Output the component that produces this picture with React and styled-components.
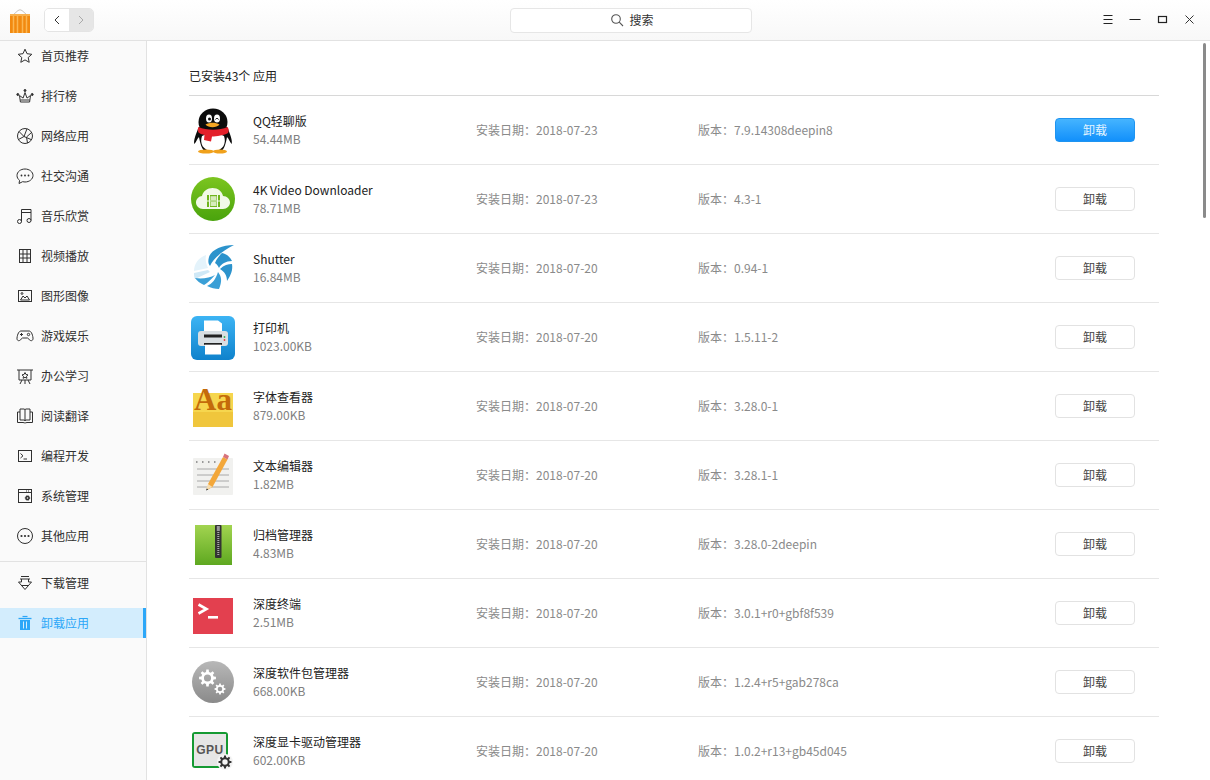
import React from "react";
import styled, { createGlobalStyle } from "styled-components";

const GlobalStyle = createGlobalStyle`
  html, body {
    margin: 0;
    padding: 0;
    background: #fff;
    overflow: hidden;
  }
  * {
    box-sizing: border-box;
  }
`;

const NavSvg = ({ children }) => (
  <svg width="18" height="18" viewBox="0 0 18 18" fill="none" stroke="currentColor" strokeWidth="1">
    {children}
  </svg>
);

const navIcons = {
  star: <path d="M9 2.200l2 4.500 4.800.6-3.600 3.200 1 4.800L9 12.900l-4.200 2.400 1-4.800-3.600-3.200L7 6.700z" />,
  crown: (
    <>
      <path d="M3.500 8.500l.9 6.500h9.200l.9-6.500-3.500 2.600L9 5.500l-1.900 5.600z" />
      <path d="M4.500 13h9" />
      <circle cx="1.800" cy="7.500" r="1" fill="currentColor" />
      <circle cx="16.200" cy="7.500" r="1" fill="currentColor" />
      <circle cx="9" cy="3.500" r="1" fill="currentColor" />
    </>
  ),
  globe: (
    <>
      <circle cx="9" cy="9" r="7.500" />
      <path d="M3 4.500l5 5-5.500 3M11 1.800L8 9.500l7 3M15.500 5.500l-5 4.500 1 6" />
    </>
  ),
  chat: (
    <>
      <path d="M9 2C4.600 2 1 4.800 1 8.500c0 2 1 3.700 2.600 4.900L3 16.500l3.600-1.800c.8.200 1.600.300 2.400.300 4.400 0 8-2.900 8-6.500S13.400 2 9 2z" />
      <circle cx="5.500" cy="8.500" r=".9" fill="currentColor" stroke="none" />
      <circle cx="9" cy="8.500" r=".9" fill="currentColor" stroke="none" />
      <circle cx="12.500" cy="8.500" r=".9" fill="currentColor" stroke="none" />
    </>
  ),
  music: (
    <>
      <path d="M5.500 14.500V2.500h9.500v11M5.500 5.500H15" />
      <circle cx="3.500" cy="14.500" r="2" />
      <circle cx="13" cy="13.500" r="2" />
    </>
  ),
  film: (
    <>
      <rect x="3.500" y="2.500" width="11" height="13" />
      <path d="M7 2.500v13M11 2.500v13M3.500 7h11M3.500 11h11" />
    </>
  ),
  image: (
    <>
      <rect x="2.500" y="3.500" width="13" height="11" />
      <path d="M4.500 13l2.500-4 2 2 2-2 2.500 4z" />
      <circle cx="6" cy="6.500" r=".9" />
    </>
  ),
  game: (
    <>
      <path d="M5 4h8c2 0 3.500 3 4 7 .3 2.500-1.800 3.500-3.200 2L11.500 11h-5l-2.300 2C2.800 14.500.7 13.500 1 11c.5-4 2-7 4-7z" />
      <path d="M5.500 6v3M4 7.500h3" />
      <circle cx="12.500" cy="7.500" r="1.200" />
    </>
  ),
  board: (
    <>
      <path d="M1 3h16M3 3v10h12V3M6 13l-2 4M12 13l2 4M9 13v4" />
      <path d="M9 5.500l1 2 2 .4-1.500 1.400.4 2L9 10.300l-1.900 1 .4-2L6 7.900l2-.4z" />
    </>
  ),
  book: (
    <>
      <path d="M4 2h4c.6 0 1 .4 1 1 0-.6.4-1 1-1h4v11h-4c-.6 0-1 .3-1 1 0-.7-.4-1-1-1H4zM9 3v11" />
      <path d="M4 5H1.500v10.500H7c1 0 1.500.5 2 .5s1-.5 2-.5h5.500V5H14" />
    </>
  ),
  terminal: (
    <>
      <rect x="2.500" y="3.500" width="13" height="11" />
      <path d="M4.500 6.500l2.500 2.300-2.500 2.200M7.500 12H11" />
    </>
  ),
  system: (
    <>
      <rect x="2.500" y="2.500" width="13" height="13" />
      <path d="M2.500 5.500h13" />
      <path d="M10 4h4" strokeDasharray="1 1" />
      <circle cx="11.500" cy="11" r="2.200" fill="currentColor" strokeDasharray="1 .6" />
      <circle cx="11.500" cy="11" r=".8" fill="#fafafa" stroke="none" />
    </>
  ),
  more: (
    <>
      <circle cx="9" cy="9" r="7.500" />
      <circle cx="5.500" cy="9" r="1.100" fill="currentColor" stroke="none" />
      <circle cx="9" cy="9" r="1.100" fill="currentColor" stroke="none" />
      <circle cx="12.500" cy="9" r="1.100" fill="currentColor" stroke="none" />
    </>
  ),
  download: <path d="M5 2.500h8M4 5h10M5.500 5v3H2.500L9 15.500 15.500 8h-3V5M5.500 11.500h7" />,
  trash: (
    <g>
      <path d="M2.500 4.500h13" strokeWidth="1.300" />
      <path d="M6.500 2.500h5" strokeWidth="1.200" />
      <path d="M4 6h10v10H4z" fill="currentColor" stroke="none" />
      <path d="M7.500 7.500v7M10.500 7.500v7" stroke="#d3edfd" />
    </g>
  ),
};

const navItems = [
  ["star", "首页推荐"],
  ["crown", "排行榜"],
  ["globe", "网络应用"],
  ["chat", "社交沟通"],
  ["music", "音乐欣赏"],
  ["film", "视频播放"],
  ["image", "图形图像"],
  ["game", "游戏娱乐"],
  ["board", "办公学习"],
  ["book", "阅读翻译"],
  ["terminal", "编程开发"],
  ["system", "系统管理"],
  ["more", "其他应用"],
];

const AppSvg = ({ children }) => (
  <svg width="48" height="48" viewBox="0 0 48 48">
    {children}
  </svg>
);

// toothed wheel with a hole, used by the package manager and gpu icons
const gearPath = (cx, cy, r, teeth) => {
  const pts = [];
  const step = (Math.PI * 2) / teeth;
  for (let i = 0; i < teeth; i++) {
    const a = i * step;
    [
      [-0.3, 0.74],
      [-0.18, 1],
      [0.18, 1],
      [0.3, 0.74],
      [0.7, 0.74],
    ].forEach(([off, k]) => {
      const t = a + off * step;
      pts.push(`${(cx + Math.cos(t) * r * k).toFixed(2)} ${(cy + Math.sin(t) * r * k).toFixed(2)}`);
    });
  }
  const h = r * 0.42;
  return `M${pts.join("L")}Z M${cx - h} ${cy}a${h} ${h} 0 1 0 ${h * 2} 0a${h} ${h} 0 1 0 ${-h * 2} 0Z`;
};

const Gear = ({ cx, cy, r, teeth = 8, color = "#fff" }) => (
  <path d={gearPath(cx, cy, r, teeth)} fill={color} fillRule="evenodd" />
);

const QQIcon = () => (
  <AppSvg>
    <path d="M10 31c-2 2-3.500 6-4.500 7C4 36 7 27 10 21h28c3 6 6 15 4.500 17-1-1-2.500-5-4.500-7-1 6-3 13-6 14H16c-3-1-5-8-6-14z" fill="#0c0c0c" />
    <ellipse cx="24" cy="16" rx="14.500" ry="13.500" fill="#0c0c0c" />
    <path d="M13 30c3-2 19-2 22 0 2.500 7-.5 15-11 15s-13.500-8-11-15z" fill="#fff" />
    <ellipse cx="20" cy="12.500" rx="3" ry="4" fill="#fff" />
    <ellipse cx="28" cy="12.500" rx="3" ry="4" fill="#fff" />
    <circle cx="20.500" cy="13" r="1.500" fill="#111" />
    <path d="M26.500 13.500c.5-1.500 2.500-1.500 3 0" stroke="#111" fill="none" />
    <path d="M16.500 18.500c4-2.500 10-2.500 14 0-3 3.500-11 3.500-14 0z" fill="#f5a623" />
    <path d="M9.500 21c8 3.500 21 3.500 29 0 1.500 2 1.500 4 .5 6-3 2-12 3.500-16 3.500l-1 5-7-1.500 .5-5c-2-.5-4-1-6-2.500-1-2-1-3.500 0-5.500z" fill="#e3202a" />
    <ellipse cx="17" cy="45.500" rx="8" ry="2" fill="#f0a11c" />
    <ellipse cx="31" cy="45.500" rx="7" ry="2" fill="#f0a11c" />
  </AppSvg>
);

const VideoIcon = () => (
  <AppSvg>
    <defs>
      <linearGradient id="vg" x1="0" y1="0" x2="0" y2="1">
        <stop offset="0" stopColor="#7cc520" />
        <stop offset="1" stopColor="#49a30c" />
      </linearGradient>
    </defs>
    <circle cx="24" cy="24" r="22" fill="url(#vg)" />
    <path d="M14 34c-4 0-7-3-7-6.500S10 21 13 21c1-5 5.500-8 10.500-8 5.500 0 9.500 3.500 10.500 8 4 0 7 3 7 6.500S38 34 34 34z" fill="#f2f9e8" />
    <rect x="18" y="20" width="13" height="12" fill="#6fb51c" />
    <path d="M20.500 20v12M28.500 20v12M18 26h13" stroke="#f2f9e8" strokeWidth="1" />
    <rect x="21.500" y="21.200" width="6" height="4" fill="#d7ecbc" />
    <rect x="21.500" y="27" width="6" height="4" fill="#d7ecbc" />
  </AppSvg>
);

const ShutterIcon = () => (
  <AppSvg>
    <path d="M17 11C9 14 5 20 5 27l14-3C17 20 16 15 17 11z" fill="#e4f3fb" />
    <path d="M5 29c0 2 0 4 1 6l15-7-2-2z" fill="#cfe8f6" />
    <path d="M45 1C33 1 22 6 20 13c-1 4-1 6 1 9C24 15 33 7 45 1z" fill="#2c93cc" />
    <path d="M26 19c2-5 5-8 7-10 5 1 8 4 10 8-6 0-11 3-13 7-1-2-2-4-4-5z" fill="#2c93cc" />
    <path d="M31 25c4-4 8-5 12-5 1 6-1 11-5 17 0-5-2-9-7-12z" fill="#2c93cc" />
    <path d="M29 28c4 5 4 10 1 17-4 0-8-1-12-3 5-2 9-7 11-14z" fill="#3a9fd6" />
    <path d="M26 31c-4 5-9 9-11 10-4-2-7-4-9-7 7 1 15 0 20-3z" fill="#3a9fd6" />
  </AppSvg>
);

const PrinterIcon = () => (
  <AppSvg>
    <defs>
      <linearGradient id="pg" x1="0" y1="0" x2="0" y2="1">
        <stop offset="0" stopColor="#3cb4f4" />
        <stop offset="1" stopColor="#0f82cc" />
      </linearGradient>
    </defs>
    <rect x="2" y="3" width="44" height="44" rx="6" fill="url(#pg)" />
    <path d="M15 19V7.500h14l4 3V19z" fill="#fff" />
    <rect x="9" y="18" width="30" height="15" rx="3" fill="#d9dfe3" />
    <rect x="15" y="21.500" width="18" height="3" fill="#222" />
    <rect x="15" y="30" width="18" height="1.800" fill="#222" />
    <rect x="16" y="31.800" width="16" height="9.700" fill="#fff" />
    <circle cx="35.500" cy="24" r=".9" fill="#32b050" />
    <circle cx="35.500" cy="27" r=".9" fill="#e04040" />
  </AppSvg>
);

const FontIcon = () => (
  <AppSvg>
    <rect x="4" y="11" width="40" height="19" fill="#f6d64e" />
    <rect x="4" y="30" width="40" height="15" fill="#f0c63c" />
    <text x="24" y="28" textAnchor="middle" fontFamily="Liberation Serif, serif" fontWeight="700" fontSize="31" fill="#c46b0a">
      Aa
    </text>
  </AppSvg>
);

const EditorIcon = () => (
  <AppSvg>
    <rect x="4" y="7" width="40" height="37" rx="1" fill="#f1f1ef" />
    <path d="M8 18h32M8 24h32M8 30h32M8 36h32" stroke="#a8a8a8" strokeWidth="1" />
    <path d="M7 11h1.500M13 11h1.500M19 11h1.500M25 11h1.500" stroke="#999" strokeWidth="2" />
    <path d="M19 33L34 6l4.500 2.500L23.500 36l-4.500 2.500z" fill="#f3a73a" />
    <path d="M19 33l4.500 3-6.500 3z" fill="#f5dcb0" />
    <path d="M17.800 37.500l1.500 1-2.300 1z" fill="#222" />
    <path d="M34 6l1.500-3.500 4.500 2.500-1.500 3.500z" fill="#d8737b" />
  </AppSvg>
);

const ArchiveIcon = () => (
  <AppSvg>
    <defs>
      <linearGradient id="ag" x1="0" y1="0" x2="0" y2="1">
        <stop offset="0" stopColor="#a2d450" />
        <stop offset="1" stopColor="#5ea820" />
      </linearGradient>
    </defs>
    <rect x="6" y="5" width="37" height="40" fill="url(#ag)" />
    <rect x="26" y="5" width="6.500" height="33" rx="1" fill="#333" />
    <rect x="27.800" y="6" width="3" height="5" fill="#999" />
    <path d="M29.300 12v24" stroke="#aaa" strokeWidth="2" strokeDasharray="1 1" />
  </AppSvg>
);

const TerminalIcon = () => (
  <AppSvg>
    <rect x="4" y="9" width="40" height="36" fill="#e3404f" />
    <path d="M9.500 15.500l8 4.500-8 4.500" fill="none" stroke="#fff" strokeWidth="2.600" />
    <rect x="19" y="27" width="10" height="2.600" fill="#fff" />
  </AppSvg>
);

const PackageIcon = () => (
  <AppSvg>
    <defs>
      <linearGradient id="kg" x1="0" y1="0" x2="0" y2="1">
        <stop offset="0" stopColor="#b8b8b8" />
        <stop offset="1" stopColor="#8a8a8a" />
      </linearGradient>
    </defs>
    <circle cx="24" cy="24" r="21" fill="url(#kg)" />
    <Gear cx={18.500} cy={20} r={8.500} />
    <Gear cx={31} cy={31} r={5.500} />
  </AppSvg>
);

const GpuIcon = () => (
  <AppSvg>
    <rect x="3" y="5" width="36" height="36" rx="3" fill="#159a32" />
    <rect x="5" y="7" width="32" height="32" fill="#e6e6e6" />
    <text x="21" y="27" textAnchor="middle" fontFamily="Liberation Sans, sans-serif" fontWeight="700" fontSize="12" letterSpacing=".5" fill="#555">
      GPU
    </text>
    <circle cx="36" cy="35" r="8" fill="#f4f4f4" />
    <Gear cx={36} cy={35} r={6.500} color="#333" />
  </AppSvg>
);

const apps = [
  { icon: <QQIcon />, name: "QQ轻聊版", size: "54.44MB", date: "2018-07-23", version: "7.9.14308deepin8", primary: true },
  { icon: <VideoIcon />, name: "4K Video Downloader", size: "78.71MB", date: "2018-07-23", version: "4.3-1" },
  { icon: <ShutterIcon />, name: "Shutter", size: "16.84MB", date: "2018-07-20", version: "0.94-1" },
  { icon: <PrinterIcon />, name: "打印机", size: "1023.00KB", date: "2018-07-20", version: "1.5.11-2" },
  { icon: <FontIcon />, name: "字体查看器", size: "879.00KB", date: "2018-07-20", version: "3.28.0-1" },
  { icon: <EditorIcon />, name: "文本编辑器", size: "1.82MB", date: "2018-07-20", version: "3.28.1-1" },
  { icon: <ArchiveIcon />, name: "归档管理器", size: "4.83MB", date: "2018-07-20", version: "3.28.0-2deepin" },
  { icon: <TerminalIcon />, name: "深度终端", size: "2.51MB", date: "2018-07-20", version: "3.0.1+r0+gbf8f539" },
  { icon: <PackageIcon />, name: "深度软件包管理器", size: "668.00KB", date: "2018-07-20", version: "1.2.4+r5+gab278ca" },
  { icon: <GpuIcon />, name: "深度显卡驱动管理器", size: "602.00KB", date: "2018-07-20", version: "1.0.2+r13+gb45d045" },
];

function App() {
  return (
    <Window>
      <GlobalStyle />
      <TitleBar>
        <TitleLeft>
          <svg width="24" height="26" viewBox="0 0 24 26">
            <path d="M5 8l5-4.500Q12 2 14 3.500L19 8" fill="none" stroke="#c9c4bd" strokeWidth="1" />
            <rect x="2" y="7" width="20" height="19" fill="#f28a10" />
            <path d="M5.500 9v17M9.500 9v17M14.500 9v17M18.500 9v17" stroke="#fbb652" strokeWidth="1.500" />
            <path d="M2 7h20v2H2z" fill="#f7b04e" />
          </svg>
          <NavButtons>
            <NavArrow>
              <svg width="8" height="10" viewBox="0 0 8 10" fill="none" stroke="#333">
                <path d="M6 1L2 5l4 4" />
              </svg>
            </NavArrow>
            <NavArrow $disabled>
              <svg width="8" height="10" viewBox="0 0 8 10" fill="none" stroke="#aaa">
                <path d="M2 1l4 4-4 4" />
              </svg>
            </NavArrow>
          </NavButtons>
        </TitleLeft>
        <SearchBox>
          <svg width="14" height="14" viewBox="0 0 14 14" fill="none" stroke="#555" strokeWidth="1.100">
            <circle cx="6" cy="6" r="4.300" />
            <path d="M9.200 9.200L13 13" />
          </svg>
          <SearchLabel>搜索</SearchLabel>
        </SearchBox>
        <WindowControls>
          <WindowButton>
            <svg width="12" height="12" viewBox="0 0 12 12" stroke="#222">
              <path d="M1.500 1.500h9M1.500 5.500h9M1.500 9.500h9" />
            </svg>
          </WindowButton>
          <WindowButton>
            <svg width="12" height="12" viewBox="0 0 12 12" stroke="#222">
              <path d="M.500 5.500h11" />
            </svg>
          </WindowButton>
          <WindowButton>
            <svg width="12" height="12" viewBox="0 0 12 12" fill="none" stroke="#222">
              <rect x="2.500" y="2.500" width="8" height="6" strokeWidth="1.200" />
            </svg>
          </WindowButton>
          <WindowButton>
            <svg width="12" height="12" viewBox="0 0 12 12" stroke="#333">
              <path d="M2.500 1.500l8 8M10.500 1.500l-8 8" />
            </svg>
          </WindowButton>
        </WindowControls>
      </TitleBar>
      <Body>
        <Sidebar>
          <NavList>
            {navItems.map(([icon, label]) => (
              <NavItem key={label}>
                <NavIcon>
                  <NavSvg>{navIcons[icon]}</NavSvg>
                </NavIcon>
                <NavLabel>{label}</NavLabel>
              </NavItem>
            ))}
          </NavList>
          <NavDivider />
          <NavItem>
            <NavIcon>
              <NavSvg>{navIcons.download}</NavSvg>
            </NavIcon>
            <NavLabel>下载管理</NavLabel>
          </NavItem>
          <ActiveNavItem>
            <NavIcon>
              <NavSvg>{navIcons.trash}</NavSvg>
            </NavIcon>
            <NavLabel>卸载应用</NavLabel>
          </ActiveNavItem>
        </Sidebar>
        <Main>
          <ListHeader>已安装43个 应用</ListHeader>
          {apps.map((app) => (
            <Row key={app.name}>
              <IconSlot>{app.icon}</IconSlot>
              <NameColumn>
                <AppName>{app.name}</AppName>
                <AppSize>{app.size}</AppSize>
              </NameColumn>
              <DateColumn>安装日期：{app.date}</DateColumn>
              <VersionColumn>版本：{app.version}</VersionColumn>
              <UninstallButton $primary={app.primary}>卸载</UninstallButton>
            </Row>
          ))}
          <ScrollThumb />
        </Main>
      </Body>
    </Window>
  );
}

const Window = styled.div`
  width: 1210px;
  height: 780px;
  display: flex;
  flex-direction: column;
  overflow: hidden;
  background: #fff;
  font-family: "Noto Sans CJK SC", "Noto Sans", sans-serif;
  font-size: 12px;
  color: #303030;
`;

const TitleBar = styled.header`
  flex: none;
  height: 41px;
  display: grid;
  grid-template-columns: 502px 242px 1fr;
  align-items: center;
  padding: 0 0 0 8px;
  background: linear-gradient(#ffffff, #f8f8f8);
  border-bottom: 1px solid #e2e2e2;
`;

const TitleLeft = styled.div`
  display: flex;
  align-items: center;
  gap: 12px;
`;

const NavButtons = styled.div`
  display: flex;
  height: 24px;
  border: 1px solid #e4e4e4;
  border-radius: 5px;
  overflow: hidden;
`;

const NavArrow = styled.div`
  width: 24px;
  display: flex;
  align-items: center;
  justify-content: center;
  background: ${(p) => (p.$disabled ? "#e6e6e6" : "#fff")};
`;

const SearchBox = styled.div`
  height: 25px;
  display: flex;
  align-items: center;
  justify-content: center;
  gap: 5px;
  padding-left: 2px;
  background: #fff;
  border: 1px solid #e6e6e6;
  border-radius: 4px;
  font-size: 12px;
  color: #333;
`;

const SearchLabel = styled.span`
  margin-bottom: 2px;
`;

const WindowControls = styled.div`
  display: flex;
  justify-content: flex-end;
  padding-right: 15px;
  gap: 15px;
`;

const WindowButton = styled.div`
  width: 12px;
  height: 12px;
  display: flex;
`;

const Body = styled.div`
  flex: 1;
  min-height: 0;
  display: flex;
`;

const Sidebar = styled.nav`
  flex: none;
  width: 147px;
  background: #fafafa;
  border-right: 1px solid #e2e2e2;
  overflow: hidden;
`;

const NavList = styled.div`
  margin-top: -5px;
`;

const NavItem = styled.div`
  height: 40px;
  display: flex;
  align-items: center;
  padding-left: 16px;
  gap: 7px;
  font-size: 12px;
  color: #303030;
`;

const ActiveNavItem = styled(NavItem)`
  height: 30px;
  margin-top: 5px;
  background: #d3edfd;
  color: #2ca7f8;
  box-shadow: inset -3px 0 0 #2ca7f8;
`;

const NavIcon = styled.span`
  width: 18px;
  height: 18px;
  display: flex;
`;

const NavLabel = styled.span`
  margin-bottom: 2px;
`;

const NavDivider = styled.div`
  height: 1px;
  background: #e2e2e2;
  margin: 5px 0 1px;
`;

const Main = styled.main`
  position: relative;
  flex: 1;
  min-width: 0;
  padding: 0 51px 0 42px;
  overflow: hidden;
`;

const ListHeader = styled.div`
  height: 55px;
  padding-top: 26px;
  line-height: 18px;
  font-size: 12px;
  color: #222;
  border-bottom: 1px solid #d8d8d8;
`;

const Row = styled.div`
  height: 69px;
  display: flex;
  align-items: center;
  border-bottom: 1px solid #e6e6e6;
`;

const IconSlot = styled.div`
  flex: none;
  width: 48px;
  height: 48px;
  margin-right: 16px;
`;

const NameColumn = styled.div`
  flex: none;
  width: 223px;
  display: flex;
  flex-direction: column;
`;

const AppName = styled.div`
  font-size: 12px;
  line-height: 18px;
  color: #222;
`;

const AppSize = styled.div`
  font-size: 12px;
  line-height: 18px;
  color: #808080;
`;

const DateColumn = styled.div`
  flex: none;
  width: 222px;
  padding-bottom: 2px;
  color: #8a8a8a;
`;

const VersionColumn = styled.div`
  flex: 1;
  padding-bottom: 2px;
  color: #8a8a8a;
`;

const UninstallButton = styled.button`
  flex: none;
  width: 80px;
  height: 24px;
  margin-right: 24px;
  padding: 0 0 2px;
  font: inherit;
  border-radius: 4px;
  border: 1px solid ${(p) => (p.$primary ? "#1f94f0" : "#e2e2e2")};
  background: ${(p) => (p.$primary ? "linear-gradient(#45b4ff, #1290fb)" : "#fff")};
  color: ${(p) => (p.$primary ? "#e3f4ff" : "#444")};
`;

const ScrollThumb = styled.div`
  position: absolute;
  top: 2px;
  right: 4px;
  width: 3px;
  height: 175px;
  border-radius: 2px;
  background: #8a8a8a;
`;

export default App;
